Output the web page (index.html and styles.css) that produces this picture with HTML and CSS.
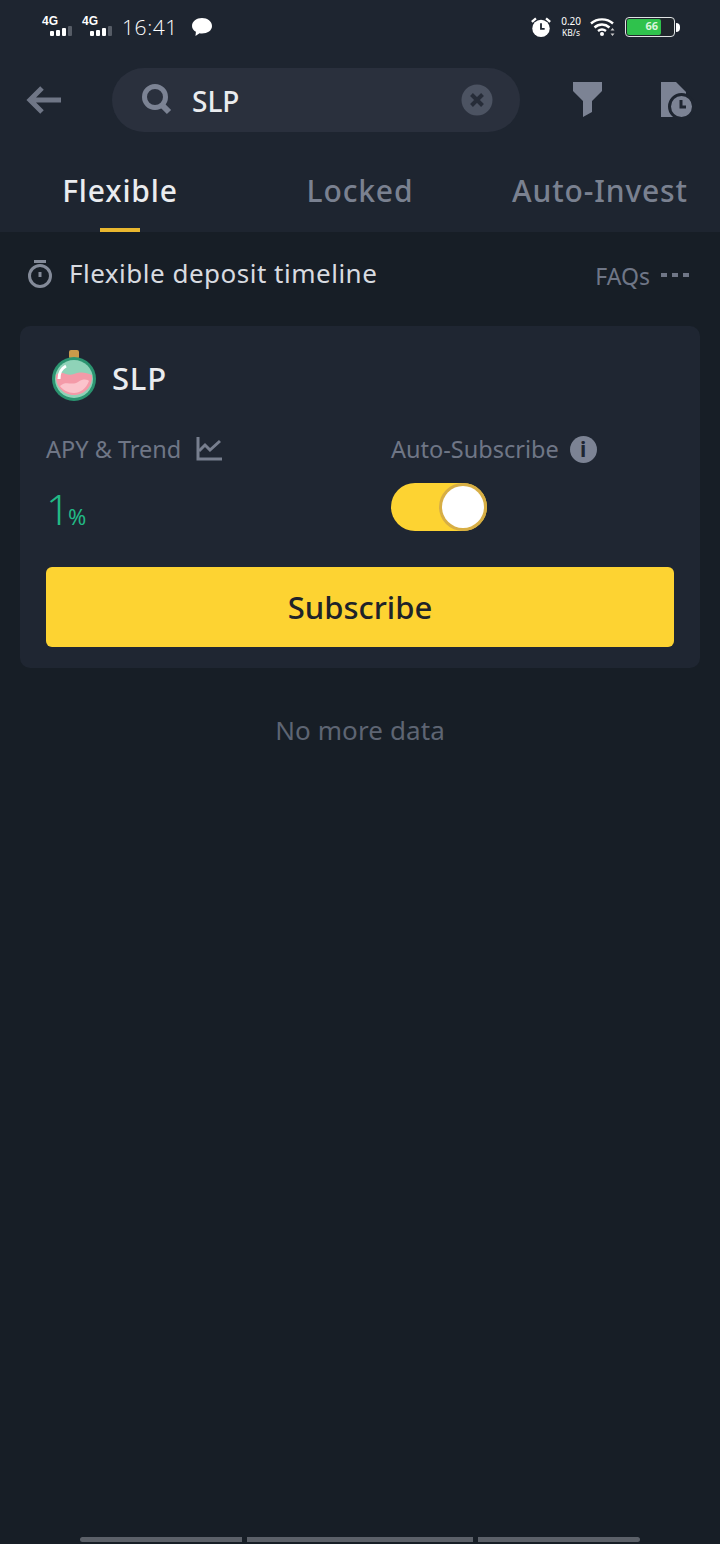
FILE: index.html
```html
<!DOCTYPE html>
<html lang="en">
<head>
  <meta charset="UTF-8">
  <meta name="viewport" content="width=device-width, initial-scale=1.0">
  <title>Earn search</title>
  <link rel="stylesheet" href="styles.css">
</head>
<body>
  <div class="top">
    <div class="status-bar">
      <div class="status-left">
        <div class="signal">
          <span class="signal-label">4G</span>
          <div class="signal-bars"><i></i><i></i><i></i><i class="off"></i></div>
        </div>
        <div class="signal">
          <span class="signal-label">4G</span>
          <div class="signal-bars"><i></i><i></i><i></i><i class="off"></i></div>
        </div>
        <span class="clock">16:41</span>
        <svg class="chat-icon" width="22" height="20" viewBox="0 0 22 20"><path d="M11 1c5.500 0 10 3.400 10 8s-4.500 7.500-10 7.500c-.9 0-1.700-.1-2.500-.3L4.500 19l.4-4.200C2.500 13.400 1 11.400 1 9c0-4.600 4.500-8 10-8z" fill="#fff"/></svg>
      </div>
      <div class="status-right">
        <svg class="alarm-icon" width="22" height="22" viewBox="0 0 24 24"><circle cx="12" cy="13.500" r="9.500" fill="#fff"/><path d="M2 6.500 6.500 2.500M22 6.500 17.500 2.500" stroke="#fff" stroke-width="2.500"/><path d="M12 8v6h4" stroke="#1e2530" stroke-width="2" fill="none"/></svg>
        <div class="net-speed"><span>0.20</span><span class="net-unit">KB/s</span></div>
        <svg width="26" height="20" viewBox="0 0 26 20"><path d="M1 6.500C7 1 17 1 23 6.500M4.500 10.500c4.500-4 10.500-4 15 0M8 14c2.500-2 5.500-2 8 0" stroke="#fff" stroke-width="2.400" fill="none"/><circle cx="12" cy="17" r="2" fill="#fff"/><path d="M22.500 11l2 2.500h-4zM22.500 19l2-2.500h-4z" fill="#ccc"/></svg>
        <div class="battery">
          <div class="battery-body"><div class="battery-fill">66</div></div>
          <div class="battery-tip"></div>
        </div>
      </div>
    </div>

    <div class="nav-row">
      <svg class="back-icon" width="38" height="30" viewBox="0 0 38 30"><path d="M36 15H5M17 3 5 15l12 12" stroke="#6f7686" stroke-width="5" fill="none"/></svg>
      <div class="search-box">
        <svg width="32" height="32" viewBox="0 0 32 32"><circle cx="14" cy="13" r="10.500" stroke="#7c8394" stroke-width="5" fill="none"/><path d="M21 21l7 7" stroke="#7c8394" stroke-width="6"/></svg>
        <span class="search-text">SLP</span>
        <svg class="clear-icon" width="32" height="32" viewBox="0 0 32 32"><circle cx="16" cy="16" r="15.500" fill="#4c5362"/><path d="M10.500 10.500l11 11M21.500 10.500l-11 11" stroke="#262c38" stroke-width="4"/></svg>
      </div>
      <div class="nav-actions">
        <svg width="30" height="36" viewBox="0 0 30 36"><path d="M0 0h29v9L19 19v11L10 35V19L0 9z" fill="#7c8394"/></svg>
        <svg width="34" height="36" viewBox="0 0 34 36"><path d="M1 0h15l10 10v25H1z" fill="#7c8394"/><circle cx="21.500" cy="24.500" r="12" fill="#7c8394" stroke="#1e2530" stroke-width="3"/><path d="M21 18v7h5" stroke="#1e2530" stroke-width="3" fill="none"/></svg>
      </div>
    </div>

    <div class="tabs">
      <div class="tab active">Flexible</div>
      <div class="tab">Locked</div>
      <div class="tab">Auto-Invest</div>
    </div>
  </div>

  <div class="timeline-row">
    <svg width="26" height="30" viewBox="0 0 26 30"><circle cx="13" cy="17" r="10.500" stroke="#848b99" stroke-width="3" fill="none"/><path d="M7 2.500h12" stroke="#848b99" stroke-width="3"/><path d="M13 13v5" stroke="#848b99" stroke-width="3"/></svg>
    <span class="timeline-text">Flexible deposit timeline</span>
    <span class="faqs">FAQs</span>
    <div class="dots"><i></i><i></i><i></i></div>
  </div>

  <div class="card">
    <div class="coin-row">
      <svg width="48" height="56" viewBox="0 0 48 56">
        <rect x="19" y="3" width="10" height="9" rx="2" fill="#c99a4a"/>
        <circle cx="24" cy="32" r="22" fill="#2b9470"/>
        <circle cx="24" cy="32" r="19" fill="#8fd3b8"/>
        <path d="M6 28c6-6 10 2 18-1s12-1 18 1c1 10-6 20-18 20S5 38 6 28z" fill="#f49aa8"/>
        <path d="M10 39c6-6 12 0 18-4s10-2 11-1c-3 8-9 12-15 12-6 0-11-3-14-7z" fill="#fbc4cc"/>
        <path d="M9 32c0-7 3-11 7-13" stroke="#fff" stroke-width="3" fill="none"/>
      </svg>
      <span class="coin-name">SLP</span>
    </div>
    <div class="info-row">
      <div class="info-col">
        <div class="info-label">
          <span>APY &amp; Trend</span>
          <svg width="26" height="24" viewBox="0 0 26 24"><path d="M2 0v22h24" stroke="#777e8e" stroke-width="3" fill="none"/><path d="M3 14l6-6 5 5 10-9" stroke="#777e8e" stroke-width="3" fill="none"/></svg>
        </div>
        <div class="apy"><span class="apy-num">1</span><span class="apy-pct">%</span></div>
      </div>
      <div class="info-col">
        <div class="info-label">
          <span>Auto-Subscribe</span>
          <div class="info-badge">i</div>
        </div>
        <div class="toggle"><div class="knob"></div></div>
      </div>
    </div>
    <div class="subscribe">Subscribe</div>
  </div>

  <div class="no-more">No more data</div>

  <div class="home-bars"><i class="b1"></i><i class="b2"></i><i class="b3"></i></div>
</body>
</html>
```

FILE: styles.css
```css
* {
  box-sizing: border-box;
}
html, body {
  height: 100%;
}
body {
  margin: 0;
  height: 1544px;
  overflow: hidden;
  display: flex;
  flex-direction: column;
  background: #171e26;
  color: #eaecef;
  font-family: 'Noto Sans', 'Inter', sans-serif;
}
.top {
  background: #1e2530;
  height: 232px;
  flex-shrink: 0;
}

/* status bar */
.status-bar {
  height: 54px;
  display: flex;
  justify-content: space-between;
  align-items: center;
  padding: 0 40px 0 42px;
}
.status-left, .status-right {
  display: flex;
  align-items: center;
}
.signal {
  width: 40px;
  display: flex;
  flex-direction: column;
  line-height: 1;
  height: 24px;
}
.signal-label {
  font-family: 'Liberation Sans', sans-serif;
  font-weight: 700;
  font-size: 12px;
  color: #fff;
}
.signal-bars {
  display: flex;
  align-items: flex-end;
  gap: 2px;
  padding-left: 8px;
  margin-top: -1px;
}
.signal-bars i {
  display: block;
  width: 4px;
  height: 8px;
  background: #fff;
  border-radius: 1px;
}
.signal-bars i:nth-child(1) { height: 5px; }
.signal-bars i:nth-child(2) { height: 6px; }
.signal-bars i:nth-child(3) { height: 8px; }
.signal-bars i.off {
  height: 10px;
  background: #565c66;
}
.clock {
  font-family: 'Open Sans', sans-serif;
  font-size: 21px;
  font-weight: 300;
  color: #fff;
  margin-right: 13px;
  letter-spacing: 0.6px;
}
.chat-icon {
  margin-top: -1px;
}
.status-right {
  gap: 9px;
}
.net-speed {
  display: flex;
  flex-direction: column;
  align-items: center;
  font-size: 10px;
  line-height: 11px;
  color: #fff;
}
.net-unit {
  font-size: 8.500px;
}
.battery {
  display: flex;
  align-items: center;
  gap: 1px;
}
.battery-body {
  width: 50px;
  height: 20px;
  border: 1.500px solid #dfe3e3;
  border-radius: 4px;
  padding: 1px;
  background: #20262c;
}
.battery-fill {
  width: 74%;
  height: 100%;
  background: #2fc24c;
  border-radius: 2px;
  color: #d9f5dc;
  font-size: 11px;
  line-height: 13px;
  font-weight: 700;
  text-align: right;
  padding-right: 3px;
}
.battery-tip {
  width: 4px;
  height: 9px;
  background: #fff;
  border-radius: 0 4px 4px 0;
}

/* search row */
.nav-row {
  height: 92px;
  display: flex;
  align-items: center;
  padding-left: 25px;
}
.back-icon {
  margin-right: 49px;
  flex-shrink: 0;
}
.search-box {
  width: 408px;
  height: 64px;
  border-radius: 32px;
  background: #2a303d;
  display: flex;
  align-items: center;
  padding: 0 27px 0 29px;
}
.search-text {
  font-size: 28px;
  font-weight: 500;
  color: #eaecef;
  margin-left: 19px;
  margin-top: 2px;
  flex: 1;
}
.nav-actions {
  display: flex;
  align-items: center;
  gap: 57px;
  margin-left: 53px;
}

/* tabs */
.tabs {
  height: 86px;
  display: flex;
}
.tab {
  font-size: 30px;
  font-weight: 500;
  letter-spacing: 0.85px;
  color: #7a8190;
  text-align: center;
  padding-top: 24px;
  position: relative;
  width: 240px;
}
.tab.active {
  color: #eaecef;
}
.tab.active::after {
  content: '';
  position: absolute;
  left: 100px;
  bottom: 0;
  width: 40px;
  height: 4px;
  background: #e9b72f;
}

/* timeline */
.timeline-row {
  height: 94px;
  display: flex;
  align-items: center;
  padding: 0 31px 0 27px;
  flex-shrink: 0;
}
.timeline-row svg {
  margin-bottom: 10px;
}
.timeline-text {
  font-size: 26px;
  letter-spacing: 0.5px;
  color: #d8dbe0;
  margin: 0 0 13px 16px;
  flex: 1;
}
.faqs {
  font-size: 23px;
  color: #6f7686;
  margin-bottom: 6px;
}
.dots {
  display: flex;
  gap: 5px;
  margin: 0 0 8px 11px;
}
.dots i {
  display: block;
  width: 6px;
  height: 4px;
  background: #6f7686;
}

/* card */
.card {
  margin: 0 20px;
  height: 342px;
  background: #1f2632;
  border-radius: 10px;
  padding: 21px 26px 0;
  flex-shrink: 0;
}
.coin-row {
  height: 56px;
  display: flex;
  align-items: center;
  padding-left: 4px;
}
.coin-name {
  font-size: 31px;
  font-weight: 500;
  letter-spacing: 0.8px;
  margin-left: 14px;
  padding-top: 6px;
  color: #eaecef;
}
.info-row {
  display: flex;
  margin-top: 31px;
}
.info-col {
  flex: 0 0 345px;
}
.info-label {
  display: flex;
  align-items: center;
  height: 30px;
  font-size: 23.500px;
  color: #6f7686;
  gap: 11px;
}
.info-label svg {
  margin-left: 4px;
}
.info-badge {
  width: 27px;
  height: 27px;
  border-radius: 50%;
  background: #7c8394;
  color: #1f2632;
  font-size: 21px;
  font-weight: 700;
  line-height: 27px;
  text-align: center;
}
.apy {
  margin-top: 21px;
  display: flex;
  align-items: baseline;
  color: #22b985;
}
.apy-num {
  font-size: 42px;
  font-weight: 300;
  line-height: 48px;
}
.apy-pct {
  font-size: 22px;
  margin-left: -2px;
}
.toggle {
  margin-top: 19px;
  width: 96px;
  height: 48px;
  border-radius: 24px;
  background: #fdd332;
  display: flex;
  justify-content: flex-end;
  padding: 3px;
}
.knob {
  width: 42px;
  height: 42px;
  border-radius: 50%;
  background: #fff;
  box-shadow: 0 0 0 3px #d7ae45;
}
.subscribe {
  margin-top: 34px;
  height: 80px;
  border-radius: 6px;
  background: #fdd332;
  color: #1e2329;
  font-size: 31px;
  font-weight: 500;
  display: flex;
  align-items: center;
  justify-content: center;
}

.no-more {
  margin-top: 44px;
  text-align: center;
  font-size: 26px;
  letter-spacing: 0.1px;
  color: #5e6573;
}

/* gesture bars at the bottom */
.home-bars {
  margin-top: auto;
  margin-bottom: 2px;
  display: flex;
  justify-content: center;
  gap: 5px;
}
.home-bars i {
  display: block;
  height: 5px;
  background: #5b6068;
}
.home-bars .b1 { width: 162px; border-radius: 3px 0 0 3px; }
.home-bars .b2 { width: 226px; }
.home-bars .b3 { width: 162px; border-radius: 0 3px 3px 0; }
```
